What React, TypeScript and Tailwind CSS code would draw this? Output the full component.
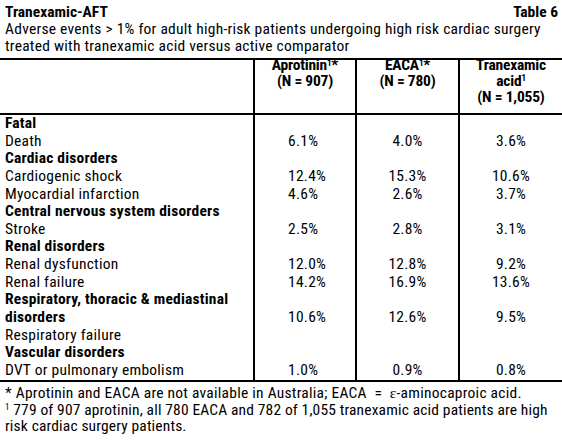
import React from "react"

type Row = { label: React.ReactNode; head?: boolean; vals?: [string, string, string] }

const ROWS: Row[] = [
  { label: "Fatal", head: true },
  { label: "Death", vals: ["6.1%", "4.0%", "3.6%"] },
  { label: "Cardiac disorders", head: true },
  { label: "Cardiogenic shock", vals: ["12.4%", "15.3%", "10.6%"] },
  { label: "Myocardial infarction", vals: ["4.6%", "2.6%", "3.7%"] },
  { label: "Central nervous system disorders", head: true },
  { label: "Stroke", vals: ["2.5%", "2.8%", "3.1%"] },
  { label: "Renal disorders", head: true },
  { label: "Renal dysfunction", vals: ["12.0%", "12.8%", "9.2%"] },
  { label: "Renal failure", vals: ["14.2%", "16.9%", "13.6%"] },
  {
    label: (
      <>
        Respiratory, thoracic &amp; mediastinal
        <br />
        disorders
      </>
    ),
    head: true,
    vals: ["10.6%", "12.6%", "9.5%"],
  },
  { label: "Respiratory failure" },
  { label: "Vascular disorders", head: true },
  { label: "DVT or pulmonary embolism", vals: ["1.0%", "0.9%", "0.8%"] },
]

function Sup({ children }: { children: React.ReactNode }) {
  return <sup className="text-[9px] leading-none">{children}</sup>
}

export default function App() {
  return (
    <div className="w-[562px] h-[444px] overflow-hidden bg-white font-['Roboto_Condensed',Roboto,sans-serif] text-[15.5px] tracking-[0.25px] text-black [font-stretch:condensed]">
      <div className="flex justify-between whitespace-nowrap pl-[5px] pr-[4px] pt-[4px] font-bold leading-[16.5px] tracking-normal">
        <span>Tranexamic-AFT</span>
        <span>Table 6</span>
      </div>
      <p className="whitespace-nowrap px-[5px] leading-[17px]">
        Adverse events &gt; 1% for adult high-risk patients undergoing high risk cardiac surgery
        <br />
        treated with tranexamic acid versus active comparator
      </p>

      <table className="mt-[3.5px] w-full table-fixed border-collapse border-y-2 border-black">
        <colgroup>
          <col className="w-[254px]" />
          <col className="w-[102px]" />
          <col className="w-[103px]" />
          <col />
        </colgroup>
        <thead>
          <tr className="h-[55px] border-b-2 border-black align-top font-bold leading-[15.8px] tracking-[-0.2px]">
            <th />
            <th className="border-l-2 border-black text-center font-bold">
              <div className="-mt-[2px]">
                Aprotinin<Sup>1</Sup>*<br />(N = 907)
              </div>
            </th>
            <th className="border-l-2 border-black text-center font-bold">
              <div className="-mt-[2px]">
                EACA<Sup>1</Sup>*<br />(N = 780)
              </div>
            </th>
            <th className="border-l-2 border-black text-center font-bold">
              <div className="-mt-[2px]">
                Tranexamic
                <br />
                acid<Sup>1</Sup>
                <br />
                (N = 1,055)
              </div>
            </th>
          </tr>
        </thead>
        <tbody className="leading-[17.64px]">
          {ROWS.map((r, i) => (
            <tr key={i} className="align-bottom">
              <td className={"whitespace-nowrap pl-[5px] " + (r.head ? "font-bold tracking-[0.2px]" : "")}>
                {r.label}
              </td>
              <td className="border-l-2 border-black pl-[33px]">{r.vals?.[0]}</td>
              <td className="border-l-2 border-black text-center">{r.vals?.[1]}</td>
              <td className="border-l-2 border-black text-center">{r.vals?.[2]}</td>
            </tr>
          ))}
        </tbody>
      </table>

      <div className="whitespace-nowrap px-[5px] pt-[3.5px] leading-[16.5px]">
        <p>
          * Aprotinin and EACA are not available in Australia; EACA &nbsp;=&nbsp;{" "}
          <span className="font-['Liberation_Serif',serif]">ε</span>-aminocaproic acid.
        </p>
        <p className="tracking-[0.15px]">
          <Sup>1</Sup> 779 of 907 aprotinin, all 780 EACA and 782 of 1,055 tranexamic acid patients are high
          <br />
          risk cardiac surgery patients.
        </p>
      </div>
    </div>
  )
}
